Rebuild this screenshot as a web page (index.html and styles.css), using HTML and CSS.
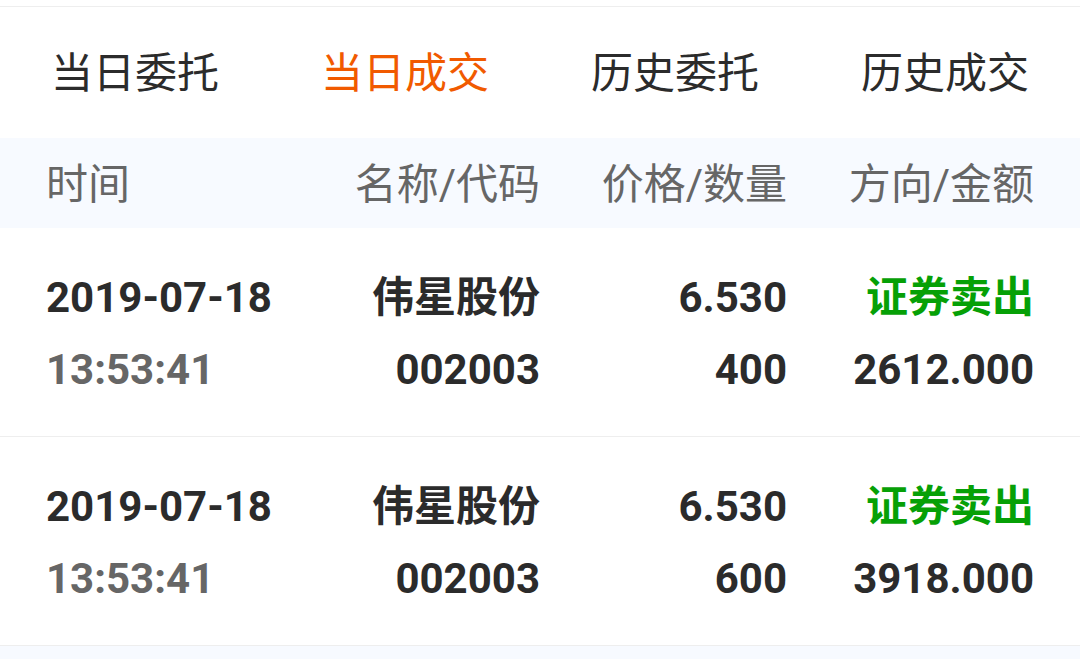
FILE: index.html
```html
<!DOCTYPE html>
<html lang="zh-CN">
<head>
<meta charset="utf-8">
<link rel="stylesheet" href="styles.css">
</head>
<body>
<div class="page">
  <div class="topbar"></div>
  <nav class="tabs">
    <div class="tab">当日委托</div>
    <div class="tab active">当日成交</div>
    <div class="tab">历史委托</div>
    <div class="tab">历史成交</div>
  </nav>
  <div class="head grid">
    <div class="c1">时间</div>
    <div class="c2">名称/代码</div>
    <div class="c3">价格/数量</div>
    <div class="c4">方向/金额</div>
  </div>
  <div class="list">
    <div class="row grid">
      <div class="c1"><div class="main">2019-07-18</div><div class="sub">13:53:41</div></div>
      <div class="c2"><div class="main">伟星股份</div><div class="main">002003</div></div>
      <div class="c3"><div class="main">6.530</div><div class="main">400</div></div>
      <div class="c4"><div class="main sell">证券卖出</div><div class="main">2612.000</div></div>
    </div>
    <div class="row grid">
      <div class="c1"><div class="main">2019-07-18</div><div class="sub">13:53:41</div></div>
      <div class="c2"><div class="main">伟星股份</div><div class="main">002003</div></div>
      <div class="c3"><div class="main">6.530</div><div class="main">600</div></div>
      <div class="c4"><div class="main sell">证券卖出</div><div class="main">3918.000</div></div>
    </div>
  </div>
</div>
</body>
</html>
```
FILE: styles.css
```css
html, body {
  margin: 0;
  padding: 0;
}
body {
  background: #f7faff;
  font-family: Roboto, "Noto Sans CJK SC", sans-serif;
  width: 1080px;
  height: 659px;
  overflow: hidden;
}
.page {
  background: #f7faff;
}
.topbar {
  height: 6px;
  background: #ffffff;
  border-bottom: 1px solid #eeeeee;
}
.tabs {
  display: flex;
  height: 131px;
  background: #ffffff;
  align-items: center;
}
.tab {
  flex: 1;
  text-align: center;
  font-size: 42px;
  color: #2b2b2b;
  line-height: 60px;
  padding-top: 2px;
}
.tab.active {
  color: #f15a00;
}
.grid {
  display: grid;
  grid-template-columns: repeat(4, 1fr);
  padding: 0 46px 0 46px;
}
.c1 { text-align: left; }
.c2, .c3, .c4 { text-align: right; }
.head {
  height: 90px;
  line-height: 90px;
  font-size: 42px;
  color: #666666;
  background: #f7faff;
  box-sizing: border-box;
  padding-top: 2px;
}
.row {
  background: #ffffff;
  padding-top: 34px;
  padding-bottom: 30px;
  border-bottom: 1px solid #eeeeee;
  font-size: 42px;
  font-weight: 700;
  color: #2b2b2b;
}
.row .main, .row .sub {
  line-height: 72px;
  height: 72px;
}
.row .sub {
  color: #666666;
}
.row .sell {
  color: #06a006;
}
```
